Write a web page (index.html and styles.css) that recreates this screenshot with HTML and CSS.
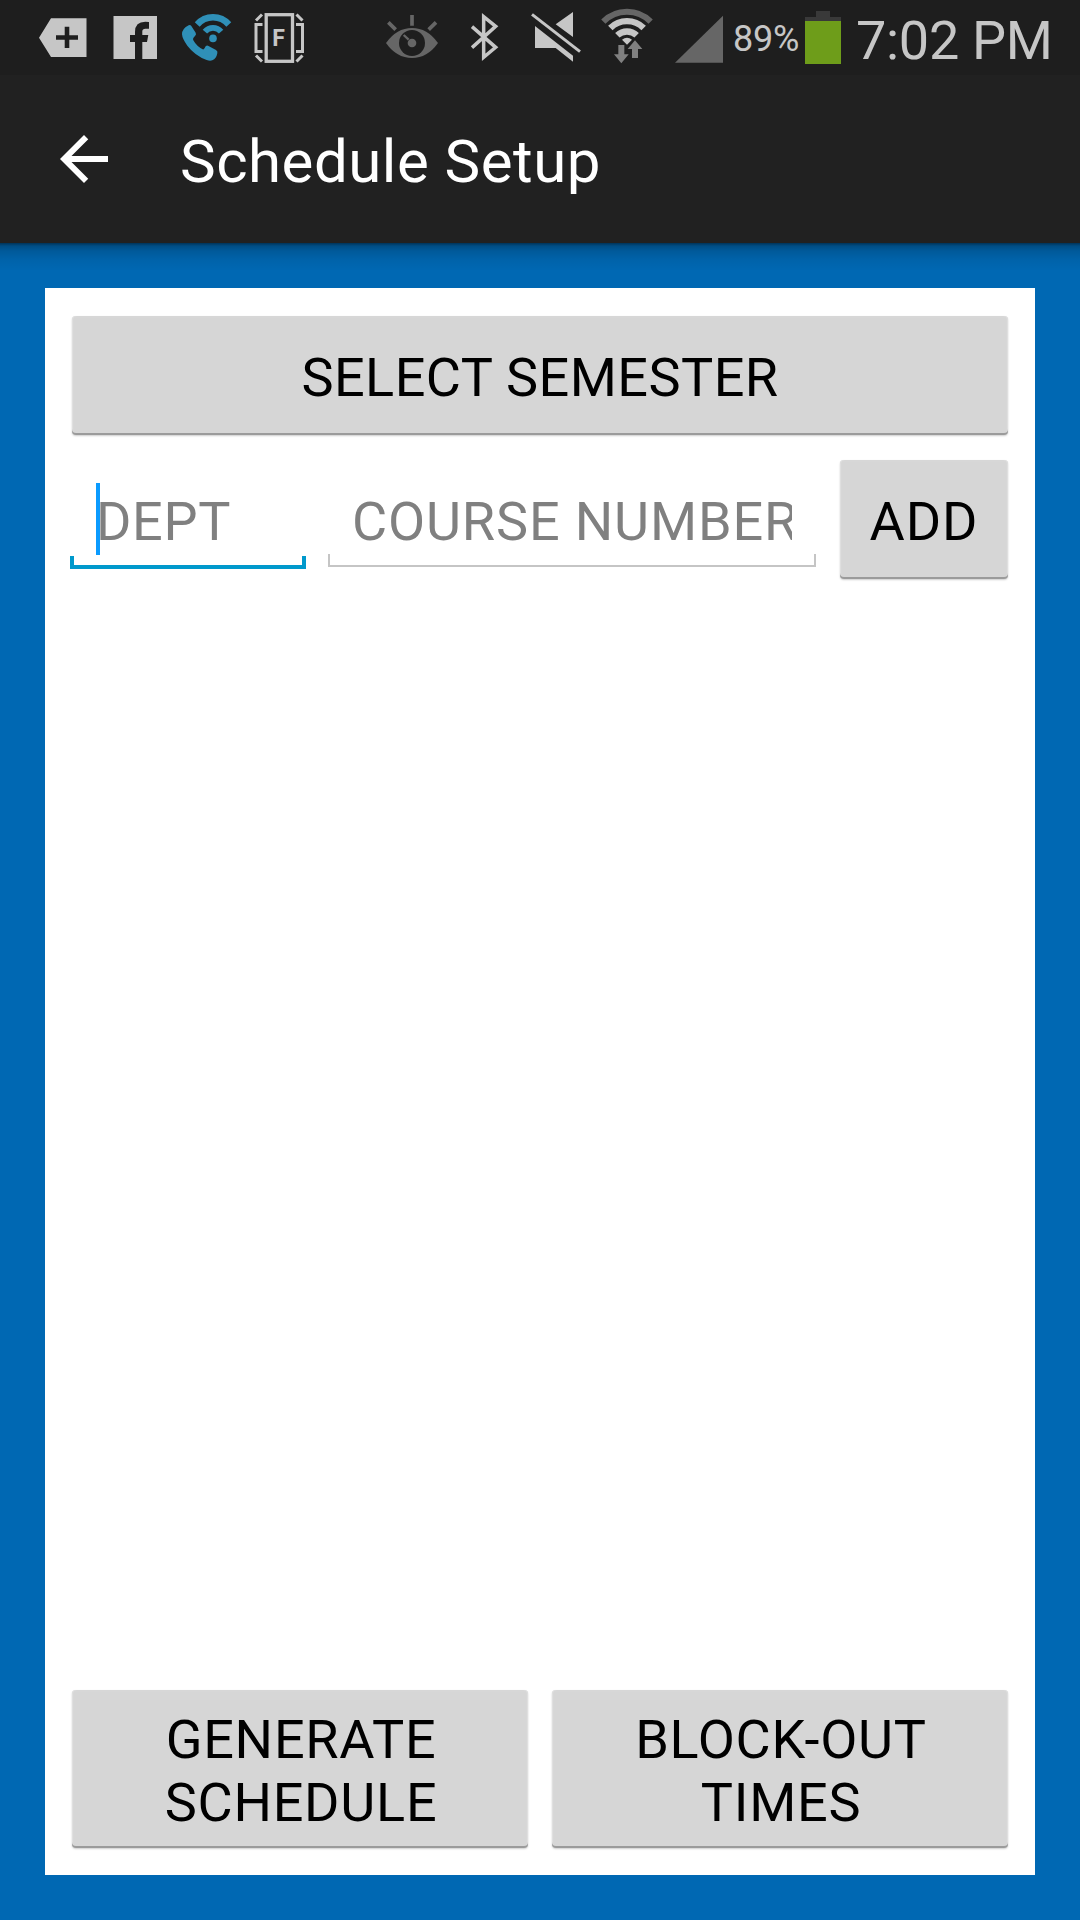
FILE: index.html
```html
<!DOCTYPE html>
<html lang="en">
<head>
<meta charset="utf-8">
<title>Schedule Setup</title>
<link rel="stylesheet" href="styles.css">
</head>
<body>
<header class="status">
  <div class="tray">
    <svg class="slot" viewBox="27 0 72 75"><path fill="#c6c6c6" fill-rule="evenodd" d="M39 37.7 51 18.3H86.5V57H51ZM64.7 26.7V35.3H56V39.7H64.7V48H69.3V39.7H78V35.3H69.3V26.7Z"/></svg>
    <svg class="slot" viewBox="99 0 72 75"><path fill="#c6c6c6" d="M113.5 16H157V59H142.3V42H147L148.3 35H142.3V31.5Q142.3 28.7 145.5 28.7H149V22Q135 20 135 32V35H130V42H135V59H113.5Z"/></svg>
    <svg class="slot" viewBox="171 0 72 75">
      <g fill="none" stroke="#2f90b8"><path stroke-width="6.5" d="M197.2 24.5A21 21 0 0 1 228.8 24.5"/><path stroke-width="5.8" d="M204.9 31.6A10.7 10.7 0 0 1 221.1 31.6"/></g>
      <circle cx="213" cy="38.4" r="3.8" fill="#2f90b8"/>
      <path fill="#2f90b8" transform="scale(.33333)" d="M546 103Q546 86 566 76Q571 74 574 78L587 98Q590 103 585 108Q577 115 580 121Q590 139 608 148Q612 149 614 144Q617 134 624 137L648 150Q654 154 652 160Q649 176 637 181Q630 184 620 180Q585 167 562 137Q547 117 546 103Z"/>
    </svg>
    <svg class="slot" viewBox="243 0 72 75">
      <g fill="none" stroke="#c6c6c6" stroke-width="3"><rect x="266.2" y="14.7" width="26.3" height="46.6" stroke-width="3.3"/><path d="M262.5 24.5H256V51.5H262.5M296 24.5H302.5V51.5H296M256 20.5 262 14.5M302.5 20.5 296.5 14.5M256 55.5 262 61.5M302.5 55.5 296.5 61.5" /></g>
      <text class="icon-letter" x="272.2" y="45.7">F</text>
    </svg>
  </div>
  <div class="tray system">
    <svg class="slot" viewBox="376 0 72 75"><g transform="translate(360) scale(.33333)"><path fill="#666" d="M78 129Q110 84 156 84T234 129Q202 174 156 174T78 129Z"/><circle cx="156" cy="129" r="39" fill="#1e1e1e"/><circle cx="156" cy="129" r="13" fill="#666"/><path stroke="#666" stroke-width="7" d="M131 105 146 119"/><path stroke="#666" stroke-width="11" d="M156 45V77M85 67 107 89M228 67 206 89"/></g></svg>
    <svg class="slot" viewBox="448 0 72 75"><path transform="translate(360) scale(.33333)" fill="none" stroke="#c6c6c6" stroke-width="10.5" d="M336 143 407 79 371 50V172L407 142 336 80"/></svg>
    <svg class="slot" viewBox="520 0 72 75"><g transform="translate(360) scale(.33333)" fill="#c6c6c6"><path d="M587 73 639 36V111ZM525 78 639 167V185L587 144H525Z"/><path stroke="#c6c6c6" stroke-width="9" d="M516 43 660 155"/></g></svg>
    <svg class="slot" viewBox="592 0 72 75"><g transform="translate(360) scale(.33333)"><g fill="none"><path stroke="#666" stroke-width="18" d="M730 65A100 100 0 0 1 872 65"/><g stroke="#c6c6c6" stroke-width="19"><path d="M751 84A71 71 0 0 1 851 84"/><path d="M772 106A42 42 0 0 1 830 106"/></g></g><path fill="#c6c6c6" d="M786 119Q801 107 816 119L801 134Z"/><path fill="#808080" d="M775 135H793V163H806L784 190 762 163H775Z"/><path fill="#808080" stroke="#1e1e1e" stroke-width="6" paint-order="stroke" d="M825 121 847 147H834V174H816V147H803Z"/></g></svg>
    <svg class="signal" viewBox="664 0 64 75"><path fill="#666" d="M675 62.7 723 15.7V62.7Z"/></svg>
    <span class="percent">89%</span>
    <svg class="battery" viewBox="805 0 36 75"><path fill="#393939" d="M805 17H816V11H830V17H841V21H805Z"/><path fill="#6e9d1a" d="M805 21H841V64H805Z"/></svg>
    <span class="clock">7:02 PM</span>
  </div>
</header>
<nav class="toolbar">
  <svg class="back" viewBox="0 0 24 24"><path fill="#fff" d="M20 11H7.83l5.59-5.59L12 4l-8 8 8 8 1.41-1.41L7.83 13H20z"/></svg>
  <h1 class="title">Schedule Setup</h1>
</nav>
<main class="content">
  <div class="card">
    <button class="btn semester">SELECT SEMESTER</button>
    <div class="entry">
      <div class="field dept"><span class="hint">DEPT</span></div>
      <div class="field course"><span class="hint">COURSE NUMBER</span></div>
      <button class="btn add">ADD</button>
    </div>
    <div class="actions">
      <button class="btn">GENERATE<br>SCHEDULE</button>
      <button class="btn">BLOCK-OUT<br>TIMES</button>
    </div>
  </div>
</main>
</body>
</html>
```
FILE: styles.css
```css
* { box-sizing: border-box; }

body {
  margin: 0;
  height: 1920px;
  display: flex;
  flex-direction: column;
  background: #0068b3;
  font-family: Roboto, "Noto Sans", sans-serif;
  overflow: hidden;
}

.status {
  height: 75px;
  flex: none;
  display: flex;
  justify-content: space-between;
  padding: 0 27px;
  background: #1e1e1e;
  color: #c6c6c6;
}

.tray { display: flex; width: 288px; }
.system { width: 677px; }
.slot { width: 72px; height: 75px; flex: none; }
.signal { width: 64px; height: 75px; flex: none; }
.battery { width: 36px; height: 75px; flex: none; }
.icon-letter { font: 700 23px Roboto, sans-serif; fill: #c6c6c6; }

.percent {
  width: 77px;
  flex: none;
  padding-left: 5px;
  font-size: 36px;
  line-height: 79px;
  letter-spacing: -.2px;
  white-space: nowrap;
}

.clock {
  flex: none;
  padding-left: 15px;
  font-size: 54px;
  line-height: 81px;
  letter-spacing: -.3px;
  white-space: nowrap;
}

.toolbar {
  height: 168px;
  flex: none;
  display: flex;
  align-items: center;
  padding-left: 48px;
  background: #212121;
}

.back { width: 72px; height: 72px; }

.title {
  margin: 5px 0 0 60px;
  font-size: 60px;
  font-weight: 400;
  line-height: 72px;
  letter-spacing: .5px;
  color: #fff;
}

.content {
  flex: 1;
  display: flex;
  padding: 45px;
  background: linear-gradient(rgba(0, 0, 0, .5), rgba(0, 0, 0, .26) 3px, rgba(0, 0, 0, .14) 8px, rgba(0, 0, 0, .05) 17px, transparent 28px);
}

.card {
  flex: 1;
  display: flex;
  flex-direction: column;
  padding: 28px 27px 27px;
  background: #fff;
}

.btn {
  height: 119px;
  padding: 3px 0 0;
  border: 0;
  border-radius: 4px;
  background: #d6d6d6;
  box-shadow: inset 0 -2px #9b9b9b, inset 0 0 2px #dedede, inset 1px 0 #e0e0e0, inset -1px 0 #e0e0e0, 0 1px 2px rgba(0, 0, 0, .2);
  color: #000;
  font: 400 54px/63px Roboto, "Noto Sans", sans-serif;
  letter-spacing: .45px;
}

.entry {
  display: flex;
  margin: 25px 0 0 -2px;
  height: 119px;
}

/* underline with a short tick rising at each end */
.field {
  height: 109px;
  padding: 23px 24px 0 26px;
  background:
    linear-gradient(var(--line), var(--line)) left bottom / 100% var(--weight) no-repeat,
    linear-gradient(var(--line), var(--line)) left bottom / var(--weight) 13px no-repeat,
    linear-gradient(var(--line), var(--line)) right bottom / var(--weight) 13px no-repeat;
}

.dept {
  --line: #0099cc;
  --weight: 4px;
  width: 236px;
}

.course {
  --line: #c5c5c5;
  --weight: 2px;
  width: 488px;
  height: 107px;
  margin-left: 22px;
  padding-left: 24px;
}

.hint {
  display: block;
  height: 72px;
  overflow: hidden;
  font-size: 54px;
  line-height: 78px;
  letter-spacing: .65px;
  white-space: nowrap;
  color: #808080;
}

.course .hint { letter-spacing: .85px; }

.dept .hint { border-left: 4px solid #0a9bff; text-indent: -4px; }

.add { width: 168px; margin-left: 24px; letter-spacing: 1px; }

.actions {
  display: flex;
  gap: 24px;
  margin-top: auto;
}

.actions .btn { flex: 1; height: 158px; padding: 4px 0 0 2px; letter-spacing: .75px; }
```
